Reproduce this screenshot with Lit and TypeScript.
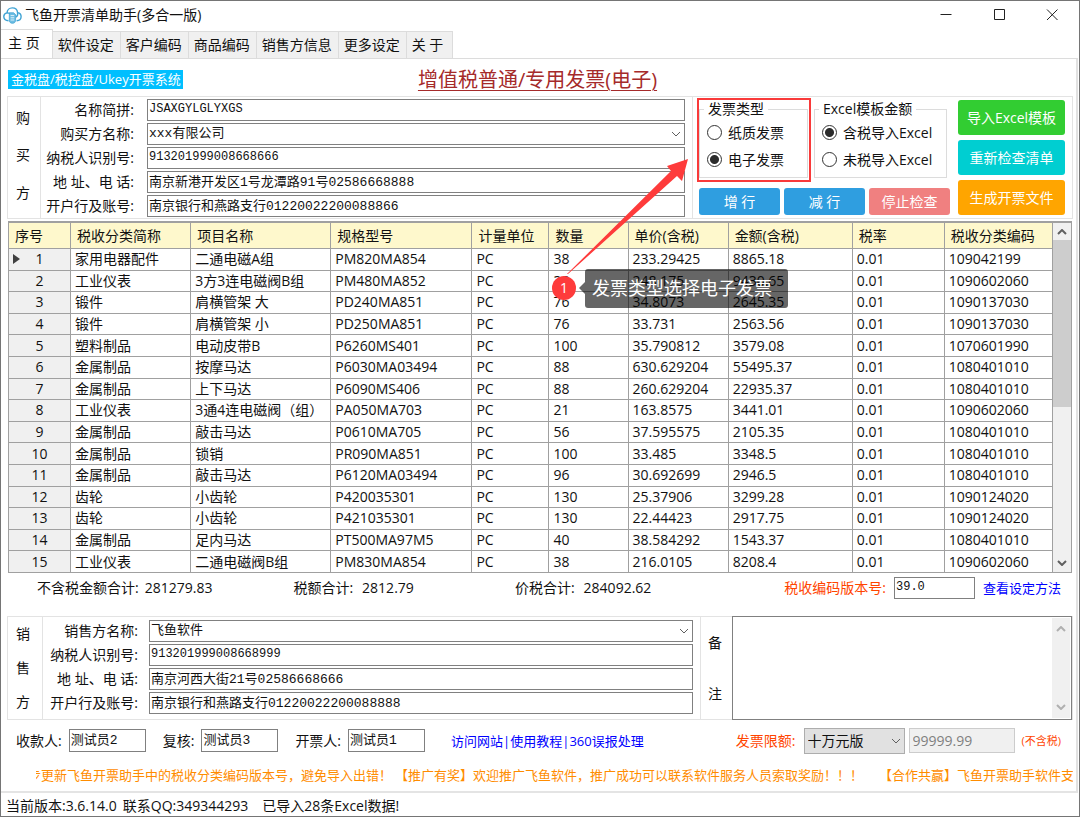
import { LitElement, html, css, svg } from "lit";
import { customElement, state } from "lit/decorators.js";

type Row = [string, string, string, string, string, string, string, string];

const ROWS: Row[] = [
  ["家用电器配件", "二通电磁A组", "PM820MA854", "38", "233.29425", "8865.18", "0.01", "109042199"],
  ["工业仪表", "3方3连电磁阀B组", "PM480MA852", "38", "248.175", "9430.65", "0.01", "1090602060"],
  ["锻件", "肩横管架 大", "PD240MA851", "76", "34.8073", "2645.35", "0.01", "1090137030"],
  ["锻件", "肩横管架 小", "PD250MA851", "76", "33.731", "2563.56", "0.01", "1090137030"],
  ["塑料制品", "电动皮带B", "P6260MS401", "100", "35.790812", "3579.08", "0.01", "1070601990"],
  ["金属制品", "按摩马达", "P6030MA03494", "88", "630.629204", "55495.37", "0.01", "1080401010"],
  ["金属制品", "上下马达", "P6090MS406", "88", "260.629204", "22935.37", "0.01", "1080401010"],
  ["工业仪表", "3通4连电磁阀（组）", "PA050MA703", "21", "163.8575", "3441.01", "0.01", "1090602060"],
  ["金属制品", "敲击马达", "P0610MA705", "56", "37.595575", "2105.35", "0.01", "1080401010"],
  ["金属制品", "锁销", "PR090MA851", "100", "33.485", "3348.5", "0.01", "1080401010"],
  ["金属制品", "敲击马达", "P6120MA03494", "96", "30.692699", "2946.5", "0.01", "1080401010"],
  ["齿轮", "小齿轮", "P420035301", "130", "25.37906", "3299.28", "0.01", "1090124020"],
  ["齿轮", "小齿轮", "P421035301", "130", "22.44423", "2917.75", "0.01", "1090124020"],
  ["金属制品", "足内马达", "PT500MA97M5", "40", "38.584292", "1543.37", "0.01", "1080401010"],
  ["工业仪表", "二通电磁阀B组", "PM830MA854", "38", "216.0105", "8208.4", "0.01", "1090602060"],
];

const HEADS = ["序号", "税收分类简称", "项目名称", "规格型号", "计量单位", "数量", "单价(含税)", "金额(含税)", "税率", "税收分类编码"];
const TABS = ["主 页", "软件设定", "客户编码", "商品编码", "销售方信息", "更多设定", "关 于"];

const chevron = (up = false) => html`<svg class="chev" viewBox="0 0 10 6" aria-hidden="true">
  ${up ? svg`<path d="M1 5 L5 1 L9 5"/>` : svg`<path d="M1 1 L5 5 L9 1"/>`}
</svg>`;

@customElement("app-root")
export class AppRoot extends LitElement {
  @state() private tab = 0;

  static styles = css`
    :host {
      display: block;
      font-family: "Open Sans", "Noto Sans CJK SC", sans-serif;
      font-size: 14px;
      line-height: 20px;
      color: #111;
    }
    * { box-sizing: border-box; }
    button, input, select, textarea { font: inherit; color: inherit; margin: 0; border-radius: 0; outline: none; }
    .window {
      position: relative;
      display: flex;
      flex-direction: column;
      min-height: 100vh;
      border: 1px solid #757575;
      background: #fff;
      overflow: hidden;
      white-space: nowrap;
    }
    .titlebar { display: flex; align-items: center; height: 28px; padding: 0 1px 0 2px; }
    .logo { width: 19px; height: 17px; margin-right: 3px; }
    .title { flex: 1; font-size: 14px; font-weight: 400; margin: 0; }
    .winbtn { width: 53px; height: 28px; padding: 0; border: 0; background: none; display: grid; place-items: center; }
    .winbtn svg { width: 12px; height: 12px; fill: none; stroke: #222; stroke-width: 1; }

    .tabs { display: flex; align-items: flex-end; height: 29px; }
    .tab { height: 27px; padding: 0 6px 0 5px; border: 1px solid #dcdcdc; border-left-width: 0; border-bottom: 0; background: #f0f0f0; }
    .tab.on { height: 29px; padding: 0 12px 2px 7px; background: #fff; }
    .tab:last-child { padding-right: 9px; }
    .page { flex: 1; display: flex; flex-direction: column; padding: 0 3px 0 6px; border-top: 1px solid #dcdcdc; border-right: 2px solid #e2e2e2; border-bottom: 2px solid #e4e4e4; margin-right: 1px; }

    .heading { display: grid; grid-template-columns: 1fr auto 1fr; align-items: center; height: 37px; padding: 4px 6px 0 1px; }
    .system { justify-self: start; font-size: 13px; line-height: 19px; padding: 0 2px 0 3px; color: #fff; background: #00bfff; }
    .invoice { margin: 0; font-size: 20px; line-height: 26px; font-weight: 400; color: #a52a2a; text-decoration: underline; text-decoration-thickness: 1px; text-underline-offset: 3px; }

    .party { display: flex; border: 1px solid #e3e3e3; }
    .side { display: flex; flex-direction: column; justify-content: space-around; align-items: center; width: 33px; padding: 2px 2px 6px 0; border-right: 1px solid #e3e3e3; }
    .form { flex: 1; display: grid; grid-template-columns: 93px 1fr; column-gap: 13px; grid-auto-rows: 24px; align-items: center; padding: 1px 7px 0 0; border-right: 1px solid #e3e3e3; }
    .form.seller { grid-template-columns: 95px 1fr; column-gap: 11px; padding: 2px 7px 4px 0; }
    .form > label { text-align: right; white-space: pre; }
    .box { width: 100%; height: 22px; padding: 0 1px 4px; border: 1px solid #808080; background: #fff; font-family: "Liberation Mono", "Noto Sans CJK SC", monospace; font-size: 13px; }
    .box.num { font-size: 12px; padding-bottom: 3px; }
    .combo { position: relative; display: block; }
    .combo select { display: block; width: 100%; appearance: none; }
    .chev { width: 10px; height: 6px; fill: none; stroke: #606060; stroke-width: 1; }
    .combo .chev { position: absolute; right: 4px; top: 8px; pointer-events: none; }

    .tools { display: flex; gap: 8px; padding: 2px 7px 3px 6px; }
    .options { width: 251px; display: flex; flex-direction: column; justify-content: space-between; }
    .groups { display: flex; gap: 6px; }
    .group { width: 109px; height: 79px; margin: 0; padding: 0 0 0 7px; border: 1px solid #dcdcdc; min-width: 0; }
    .group.wide { width: 133px; }
    .group legend { padding: 0 4px; margin-left: -3px; }
    .radio { display: flex; align-items: center; gap: 6px; height: 27px; }
    .radio input { appearance: none; width: 15px; height: 15px; border: 1px solid #333; border-radius: 50%; background: #fff; }
    .radio input:checked { background: radial-gradient(circle, #2b2b2b 4px, #fff 5px); }
    .acts { display: flex; gap: 4px; }
    .btn { flex: 1; height: 27px; padding: 0; border: 0; border-radius: 3px; color: #fff; background: #2f9ee0; }
    .btn.stop { background: #f08080; }
    .big { width: 107px; display: flex; flex-direction: column; gap: 5px; padding-top: 1px; }
    .big .btn { flex: none; height: 35px; }
    .big .green { background: #32cd32; }
    .big .cyan { background: #00ced1; }
    .big .orange { background: #ffa500; }

    .grid { display: flex; height: 352px; margin: 2px 1px 0; border: 1px solid #a0a0a0; border-top-width: 2px; }
    table { flex: 1; height: 100%; table-layout: fixed; border-collapse: separate; border-spacing: 0; }
    th, td { padding: 0 0 0 4px; text-align: left; font-weight: 400; overflow: hidden; border-right: 1px solid #a0a0a0; border-bottom: 1px solid #a0a0a0; line-height: 20px; }
    th { height: 26px; padding-left: 6px; background: #fef8cc; }
    td.no { background: #f0f0f0; padding: 0; text-align: center; position: relative; }
    .cursor { position: absolute; left: 4px; top: 5px; width: 7px; height: 10px; fill: #404040; }
    tbody tr:last-child td { border-bottom: 0; }
    .c0 { width: 62px; } .c1 { width: 120px; } .c2 { width: 140px; } .c3 { width: 141px; } .c4 { width: 77px; }
    .c5 { width: 79px; } .c6 { width: 100px; } .c7 { width: 124px; } .c8 { width: 92px; } .c9 { width: 108px; }
    .scroll { width: 18px; display: flex; flex-direction: column; justify-content: space-between; align-items: center; padding: 6px 0; background: #f0f0f0; }
    .thumb { width: 100%; height: 167px; margin: 5px 0 auto; background: #cdcdcd; }
    .grid .chev { stroke-width: 2; }

    .totals { display: flex; height: 43px; padding: 4px 12px 0 30px; align-items: flex-start; line-height: 22px; }
    .totals dl { flex: 1; display: flex; margin: 0; }
    .totals dt, .totals dd { margin: 0; }
    .sum { display: flex; gap: 6px; }
    .sum.second, .sum.third { gap: 9px; }
    .sum.first { flex: 257; } .sum.second { flex: 222; } .sum.third { flex: 270; }
    .warn { color: #ff4500; }
    .version { width: 81px; margin: 0 8px; }
    a { color: #00f; font-size: 13px; text-decoration: none; }

    .side.seller { width: 35px; padding: 0 4px 0 0; }
    .remark { display: flex; flex-direction: column; justify-content: space-around; align-items: center; width: 31px; padding-right: 3px; }
    .memo { width: 340px; display: flex; margin: -1px 0; border: 1px solid #808080; }
    .memo textarea { flex: 1; min-width: 0; resize: none; border: 0; padding: 2px; }
    .memo .chev { stroke: #b0b0b0; stroke-width: 2; }
    .memo .scroll { padding: 8px 0; margin: 1px 1px 1px 0; }

    .people { display: flex; align-items: center; height: 41px; padding: 0 12px 0 9px; }
    .people .box { width: 77px; height: 23px; margin: 0 17px 0 7px; }
    .people .links { flex: 1; padding-left: 9px; font-size: 13px; color: #00f; }
    .limit { width: 101px; margin: 0 4px 0 8px; }
    .limit select { height: 26px; padding: 0 3px; border: 1px solid #adadad; background: #e1e1e1; }
    .limit .chev { top: 10px; }
    .amount { width: 106px; height: 25px; padding: 0 3px; border: 1px solid #ccc; background: #f0f0f0; color: #808080; }
    .note { margin-left: 7px; font-size: 11px; }

    .marquee { display: flex; margin: 0 0 0 29px; height: 29px; line-height: 29px; overflow: hidden; font-size: 13px; color: #ff8c00; }
    .marquee span { flex: none; margin-right: 16px; }
    .marquee span:first-child { margin: 0 3px 0 -8px; }
    .status { display: flex; height: 23px; padding-left: 5px; gap: 6px; line-height: 25px; }
    .status .done { margin-left: 8px; }

    .notes { position: absolute; left: 0; top: 0; width: 100%; height: 100%; pointer-events: none; }
    .tip { position: absolute; left: 584px; top: 268px; width: 203px; height: 39px; padding-left: 7px; border-radius: 3px; background: rgba(0, 0, 0, 0.6); color: #fff; font-size: 18px; line-height: 39px; pointer-events: none; }
    .tip::before { content: ""; position: absolute; left: -6px; top: 13px; border: 6px solid transparent; border-left: 0; border-right-color: rgba(0, 0, 0, 0.6); }
    .mark { position: absolute; left: 551px; top: 275px; width: 24px; height: 24px; border-radius: 50%; background: #fe3b3b; color: #fff; text-align: center; line-height: 24px; pointer-events: none; }
    .frame { position: absolute; left: 696px; top: 97px; width: 114px; height: 84px; border: 2px solid #f93a3a; pointer-events: none; }
  `;

  private field(id: string, label: string, value: string, combo = false) {
    const num = /^[\x20-\x7e]+$/.test(value) ? "box num" : "box";
    return html`<label for=${id}>${label}</label>
      ${combo
        ? html`<span class="combo"><select id=${id} class="box"><option>${value}</option></select>${chevron()}</span>`
        : html`<input id=${id} class=${num} .value=${value} />`}`;
  }

  private radio(name: string, label: string, checked: boolean) {
    return html`<label class="radio"><input type="radio" name=${name} .checked=${checked} />${label}</label>`;
  }

  render() {
    return html`<div class="window">
      <header class="titlebar">
        <svg class="logo" viewBox="0 0 19 17" fill="none" stroke="#3fa3d4" stroke-width="1.4" aria-hidden="true">
          <path d="M5.500 13.800 C2.300 13.800 .8 11.800 .8 9.600 C.8 7.600 2.200 6.200 4 5.900 C4.200 2.900 6.500 .9 9.300 .9 C12.200 .9 14.300 2.900 14.600 5.600 C16.800 6 18.200 7.600 18.100 9.800 C18 12.300 16.200 13.700 13.600 13.800"/>
          <path d="M4 5.900 C5.500 5.700 6.600 6.300 7.200 7.400 M14.600 5.600 C15 8 14 9.500 13 10"/>
          <path d="M6.300 5.800 H10.600 L12.600 7.600 V13.300 C12.600 15.200 11.200 16.300 9.500 16.300 C7.600 16.300 6.300 15.200 6.300 13.300 Z" fill="#6dbde2" stroke-width=".8"/>
          <path d="M7.600 8.600 H11.200 M7.600 10.800 H11.200 M7.600 13 H11.200" stroke="#fff" stroke-width=".8"/>
        </svg>
        <h1 class="title">飞鱼开票清单助手(多合一版)</h1>
        <button class="winbtn" aria-label="最小化"><svg viewBox="0 0 12 12"><path d="M0.500 5.500 H11.500"/></svg></button>
        <button class="winbtn" aria-label="最大化"><svg viewBox="0 0 12 12"><path d="M1.500 0.500 H11.500 V10.500 H1.500 Z"/></svg></button>
        <button class="winbtn" aria-label="关闭"><svg viewBox="0 0 12 12"><path d="M1 0.500 L11.500 11 M11.500 0.500 L1 11"/></svg></button>
      </header>
      <nav class="tabs" role="tablist">
        ${TABS.map((t, i) => html`<button role="tab" aria-selected=${i === this.tab} class="tab ${i === this.tab ? "on" : ""}" @click=${() => (this.tab = i)}>${t}</button>`)}
      </nav>
      <main class="page">
        <div class="heading">
          <span class="system">金税盘/税控盘/Ukey开票系统</span>
          <h2 class="invoice">增值税普通/专用发票(电子)</h2>
        </div>

        <section class="party">
          <div class="side"><span>购</span><span>买</span><span>方</span></div>
          <div class="form">
            ${this.field("b1", "名称简拼:", "JSAXGYLGLYXGS")}
            ${this.field("b2", "购买方名称:", "xxx有限公司", true)}
            ${this.field("b3", "纳税人识别号:", "913201999008668666")}
            ${this.field("b4", "地 址、电 话:", "南京新港开发区1号龙潭路91号02586668888")}
            ${this.field("b5", "开户行及账号:", "南京银行和燕路支行01220022200088866")}
          </div>
          <div class="tools">
            <div class="options">
              <div class="groups">
                <fieldset class="group">
                  <legend>发票类型</legend>
                  ${this.radio("kind", "纸质发票", false)} ${this.radio("kind", "电子发票", true)}
                </fieldset>
                <fieldset class="group wide">
                  <legend>Excel模板金额</legend>
                  ${this.radio("tax", "含税导入Excel", true)} ${this.radio("tax", "未税导入Excel", false)}
                </fieldset>
              </div>
              <div class="acts">
                <button class="btn">增 行</button>
                <button class="btn">减 行</button>
                <button class="btn stop">停止检查</button>
              </div>
            </div>
            <div class="big">
              <button class="btn green">导入Excel模板</button>
              <button class="btn cyan">重新检查清单</button>
              <button class="btn orange">生成开票文件</button>
            </div>
          </div>
        </section>

        <section class="grid">
          <table>
            <colgroup>${HEADS.map((_, i) => html`<col class="c${i}" />`)}</colgroup>
            <thead><tr>${HEADS.map((h) => html`<th>${h}</th>`)}</tr></thead>
            <tbody>
              ${ROWS.map(([kind, name, model, ...rest], i) => html`<tr>
                <td class="no">${i === 0 ? html`<svg class="cursor" viewBox="0 0 7 10"><path d="M0 0 L7 5 L0 10 Z"/></svg>` : ""}${i + 1}</td>
                ${[kind, name, model, "PC", ...rest].map((v) => html`<td>${v}</td>`)}
              </tr>`)}
            </tbody>
          </table>
          <div class="scroll">${chevron(true)}<div class="thumb"></div>${chevron()}</div>
        </section>

        <section class="totals">
          <dl>
            <div class="sum first"><dt>不含税金额合计:</dt><dd>281279.83</dd></div>
            <div class="sum second"><dt>税额合计:</dt><dd>2812.79</dd></div>
            <div class="sum third"><dt>价税合计:</dt><dd>284092.62</dd></div>
          </dl>
          <label class="warn" for="ver">税收编码版本号:</label>
          <input id="ver" class="box version num" .value=${"39.0"} />
          <a href="#help">查看设定方法</a>
        </section>

        <section class="party">
          <div class="side seller"><span>销</span><span>售</span><span>方</span></div>
          <div class="form seller">
            ${this.field("s1", "销售方名称:", "飞鱼软件", true)}
            ${this.field("s2", "纳税人识别号:", "913201999008668999")}
            ${this.field("s3", "地 址、电 话:", "南京河西大街21号02586668666")}
            ${this.field("s4", "开户行及账号:", "南京银行和燕路支行01220022200088888")}
          </div>
          <label class="remark" for="memo"><span>备</span><span>注</span></label>
          <div class="memo">
            <textarea id="memo"></textarea>
            <div class="scroll">${chevron(true)}${chevron()}</div>
          </div>
        </section>

        <section class="people">
          <label for="p1">收款人:</label><input id="p1" class="box" .value=${"测试员2"} />
          <label for="p2">复核:</label><input id="p2" class="box" .value=${"测试员3"} />
          <label for="p3">开票人:</label><input id="p3" class="box" .value=${"测试员1"} />
          <span class="links"><a href="#site">访问网站</a>|<a href="#guide">使用教程</a>|<a href="#safe">360误报处理</a></span>
          <label class="warn" for="lim">发票限额:</label>
          <span class="combo limit"><select id="lim"><option>十万元版</option></select>${chevron()}</span>
          <input class="amount" aria-label="限额" disabled .value=${"99999.99"} />
          <span class="note warn">(不含税)</span>
        </section>

        <div class="marquee">
          <span>步更新飞鱼开票助手中的税收分类编码版本号，避免导入出错！</span>
          <span>【推广有奖】欢迎推广飞鱼软件，推广成功可以联系软件服务人员索取奖励！！！</span>
          <span>【合作共赢】飞鱼开票助手软件支持</span>
        </div>
      </main>
      <footer class="status">
        <span>当前版本:3.6.14.0</span><span>联系QQ:349344293</span><span class="done">已导入28条Excel数据!</span>
      </footer>

      <div class="frame"></div>
      <svg class="notes" aria-hidden="true">
        <path fill="#fe3b3b" d="M566 273 L670 170 L666 165 L687 158 L681 180 L676 175 L567 273 Z"/>
      </svg>
      <div class="mark">1</div>
      <div class="tip">发票类型选择电子发票</div>
    </div>`;
  }
}
